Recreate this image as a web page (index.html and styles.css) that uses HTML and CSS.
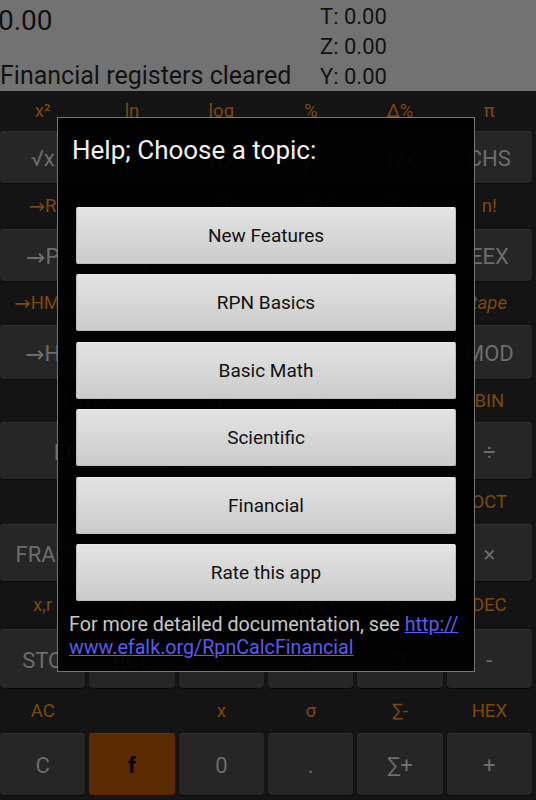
FILE: index.html
```html
<!DOCTYPE html>
<html>
  <head>
    <meta charset="utf-8">
    <meta name="viewport" content="width=device-width, initial-scale=1">
    <link rel="stylesheet" href="styles.css">
    <title>RPN Calc Financial</title>
  </head>
  <body>
    <div class="app">
      <div class="display">
        <div class="readout">
          <div class="xval">0.00</div>
          <div class="msg">Financial registers cleared</div>
        </div>
        <div class="stack">
          <div>T: 0.00</div>
          <div>Z: 0.00</div>
          <div>Y: 0.00</div>
        </div>
      </div>

      <div class="keypad">
        <div class="lbl">x²</div><div class="lbl">ln</div><div class="lbl">log</div><div class="lbl">%</div><div class="lbl">Δ%</div><div class="lbl">π</div>
        <div class="key">√x</div><div class="key">eˣ</div><div class="key">10ˣ</div><div class="key">yˣ</div><div class="key">1/x</div><div class="key">CHS</div>

        <div class="lbl"><span class="arrow">→</span>R</div><div class="lbl"></div><div class="lbl">ASIN</div><div class="lbl">ACOS</div><div class="lbl">ATAN</div><div class="lbl">n!</div>
        <div class="key"><span class="arrow">→</span>P</div><div class="key">x⇄y</div><div class="key">SIN</div><div class="key">COS</div><div class="key">TAN</div><div class="key">EEX</div>

        <div class="lbl"><span class="arrow">→</span>HMS</div><div class="lbl">R↑</div><div class="lbl"></div><div class="lbl"></div><div class="lbl"></div><div class="lbl tape">tape</div>
        <div class="key"><span class="arrow">→</span>H</div><div class="key">R↓</div><div class="key">CLx</div><div class="key">INT</div><div class="key">ABS</div><div class="key">MOD</div>

        <div class="lbl wide">Last x</div><div class="lbl">FIX</div><div class="lbl">SCI</div><div class="lbl">ENG</div><div class="lbl">BIN</div>
        <div class="key wide">ENTER</div><div class="key">7</div><div class="key">8</div><div class="key">9</div><div class="key">÷</div>

        <div class="lbl"></div><div class="lbl"></div><div class="lbl"></div><div class="lbl"></div><div class="lbl"></div><div class="lbl">OCT</div>
        <div class="key">FRAC</div><div class="key">RND</div><div class="key">4</div><div class="key">5</div><div class="key">6</div><div class="key">×</div>

        <div class="lbl">x,r</div><div class="lbl">y,r</div><div class="lbl">P(y,x)</div><div class="lbl">C(y,x)</div><div class="lbl">L.R.</div><div class="lbl">DEC</div>
        <div class="key">STO</div><div class="key">RCL</div><div class="key">1</div><div class="key">2</div><div class="key">3</div><div class="key">-</div>

        <div class="lbl">AC</div><div class="lbl"></div><div class="lbl">x</div><div class="lbl">σ</div><div class="lbl">∑-</div><div class="lbl">HEX</div>
        <div class="key">C</div><div class="key fkey">f</div><div class="key">0</div><div class="key">.</div><div class="key">∑+</div><div class="key">+</div>
      </div>

      <div class="dialog">
        <div class="dialog-title">Help; Choose a topic:</div>
        <div class="topics">
          <button class="topic">New Features</button>
          <button class="topic">RPN Basics</button>
          <button class="topic">Basic Math</button>
          <button class="topic">Scientific</button>
          <button class="topic">Financial</button>
          <button class="topic">Rate this app</button>
        </div>
        <p class="more">For more detailed documentation, see <a href="#">http://<br>www.efalk.org/RpnCalcFinancial</a></p>
      </div>
    </div>
  </body>
</html>
```

FILE: styles.css
```css
body {
    margin: 0; width: 536px; height: 800px; overflow: hidden;
    font-family: Roboto, "Noto Sans", sans-serif;
    background: #141414;
}
.app { position: relative; height: 800px; }

/* dimmed display */
.display {
    height: 91px; background: #727272; color: #121212;
    display: flex;
}
.readout {
    width: 320px;
    display: flex; flex-direction: column; justify-content: space-between;
}
.xval { font-size: 28px; line-height: 34px; padding-top: 4px; margin-left: -2px; }
.msg { font-size: 25px; line-height: 30px; white-space: nowrap; }
.stack { font-size: 22px; line-height: 30px; padding-top: 2px; }

/* keys */
.keypad {
    display: grid;
    grid-template-columns: repeat(6, 1fr);
    grid-template-rows: 40px 52px 46px 52px 44px 54px 43px 57px 45px 57px 48px 59px 45px 62px;
    column-gap: 4px;
    padding-right: 4px;
}
.lbl {
    color: #7b4a0b; font-size: 18.5px;
    display: flex; align-items: center; justify-content: center;
}
.tape { font-style: italic; }
.arrow { font-family: "DejaVu Sans", sans-serif; font-size: 1.05em; }
.key {
    background: #262626; color: #6c6c6c; font-size: 22px;
    border-radius: 4px; padding-top: 3px; box-sizing: border-box;
    box-shadow: inset 0 1px 0 #2f2f2f, 0 1px 1px #0a0a0a;
    display: flex; align-items: center; justify-content: center;
}
.wide { grid-column: span 2; }
.fkey { background: #5c2b02; color: #000; font-weight: bold; box-shadow: inset 0 1px 0 #6a3306; }

/* help dialog */
.dialog {
    position: absolute; left: 57px; top: 117px;
    width: 418px; height: 555px; box-sizing: border-box;
    border: 1px solid #777;
    background: rgba(0, 0, 0, 0.94);
}
.dialog-title {
    color: #f2f2f2; font-size: 26px; line-height: 32px;
    padding: 16px 0 0 14px;
}
.topics {
    margin: 41px 18px 0 18px;
    display: flex; flex-direction: column; gap: 10.4px;
}
.topic {
    height: 57px; margin: 0; padding: 0;
    font-family: Roboto, "Noto Sans", sans-serif; font-size: 19px; color: #111;
    background: linear-gradient(#e3e3e3, #cbcbcb);
    border: 1px solid #bdbdbd; border-top-color: #e9e9e9;
    border-radius: 2px;
}
.more {
    margin: 12px 0 0 11px;
    color: #c8c8c8; font-size: 19.7px; line-height: 23px;
}
.more a { color: #5a5af0; }
```
